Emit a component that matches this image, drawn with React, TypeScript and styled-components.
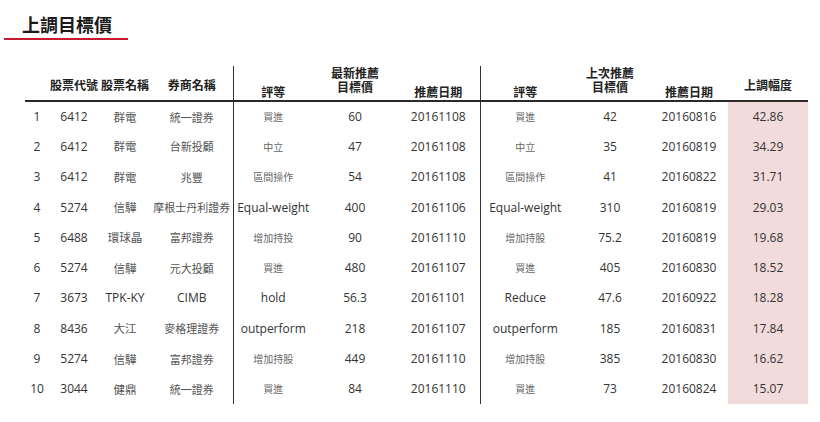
import React from 'react'
import styled, { createGlobalStyle } from 'styled-components'

type Row = {
  code: string
  name: string
  broker: string
  rating: string
  target: string
  date: string
  prevRating: string
  prevTarget: string
  prevDate: string
  change: string
}

const ROWS: Row[] = [
  { code: '6412', name: '群電', broker: '統一證券', rating: '買進', target: '60', date: '20161108', prevRating: '買進', prevTarget: '42', prevDate: '20160816', change: '42.86' },
  { code: '6412', name: '群電', broker: '台新投顧', rating: '中立', target: '47', date: '20161108', prevRating: '中立', prevTarget: '35', prevDate: '20160819', change: '34.29' },
  { code: '6412', name: '群電', broker: '兆豐', rating: '區間操作', target: '54', date: '20161108', prevRating: '區間操作', prevTarget: '41', prevDate: '20160822', change: '31.71' },
  { code: '5274', name: '信驊', broker: '摩根士丹利證券', rating: 'Equal-weight', target: '400', date: '20161106', prevRating: 'Equal-weight', prevTarget: '310', prevDate: '20160819', change: '29.03' },
  { code: '6488', name: '環球晶', broker: '富邦證券', rating: '增加持投', target: '90', date: '20161110', prevRating: '增加持股', prevTarget: '75.2', prevDate: '20160819', change: '19.68' },
  { code: '5274', name: '信驊', broker: '元大投顧', rating: '買進', target: '480', date: '20161107', prevRating: '買進', prevTarget: '405', prevDate: '20160830', change: '18.52' },
  { code: '3673', name: 'TPK-KY', broker: 'CIMB', rating: 'hold', target: '56.3', date: '20161101', prevRating: 'Reduce', prevTarget: '47.6', prevDate: '20160922', change: '18.28' },
  { code: '8436', name: '大江', broker: '麥格理證券', rating: 'outperform', target: '218', date: '20161107', prevRating: 'outperform', prevTarget: '185', prevDate: '20160831', change: '17.84' },
  { code: '5274', name: '信驊', broker: '富邦證券', rating: '增加持股', target: '449', date: '20161110', prevRating: '增加持股', prevTarget: '385', prevDate: '20160830', change: '16.62' },
  { code: '3044', name: '健鼎', broker: '統一證券', rating: '買進', target: '84', date: '20161110', prevRating: '買進', prevTarget: '73', prevDate: '20160824', change: '15.07' },
]

// column widths, left to right
const COLS = [24, 50, 52, 82, 80, 84, 83, 90, 80, 78, 80]

const isCjk = (s: string) => /[\u4e00-\u9fff]/.test(s)

const App: React.FC = () => {
  return (
    <>
      <GlobalStyle />
      <Page>
        <Title>上調目標價</Title>
        <Table>
          <colgroup>
            {COLS.map((w, i) => (
              <col key={i} style={{ width: w }} />
            ))}
          </colgroup>
          <thead>
            <tr>
              <Th />
              <Th>股票代號</Th>
              <Th>股票名稱</Th>
              <Th>券商名稱</Th>
              <Th $divider $align="bottom">評等</Th>
              <Th $align="stacked">最新推薦<br />目標價</Th>
              <Th $align="bottom">推薦日期</Th>
              <Th $divider $align="bottom">評等</Th>
              <Th $align="stacked">上次推薦<br />目標價</Th>
              <Th $align="bottom">推薦日期</Th>
              <Th>上調幅度</Th>
            </tr>
          </thead>
          <tbody>
            {ROWS.map((r, i) => (
              <tr key={i}>
                <Td>{i + 1}</Td>
                <Td>{r.code}</Td>
                <Td $cjk={isCjk(r.name)}>{r.name}</Td>
                <Td $cjk={isCjk(r.broker)} $narrow>{r.broker}</Td>
                <Td $divider>
                  <Rating $small={isCjk(r.rating)}>{r.rating}</Rating>
                </Td>
                <Td>{r.target}</Td>
                <Td>{r.date}</Td>
                <Td $divider>
                  <Rating $small={isCjk(r.prevRating)}>{r.prevRating}</Rating>
                </Td>
                <Td>{r.prevTarget}</Td>
                <Td>{r.prevDate}</Td>
                <Td $highlight>{r.change}</Td>
              </tr>
            ))}
          </tbody>
        </Table>
      </Page>
    </>
  )
}

export default App

const GlobalStyle = createGlobalStyle`
  html, body {
    margin: 0;
    padding: 0;
    background: #fff;
  }
  body {
    font-family: 'Open Sans', 'Noto Sans CJK TC', sans-serif;
    color: #333;
  }
`

const Page = styled.div`
  width: 820px;
  height: 422px;
  padding: 12px 0 0 0;
  box-sizing: border-box;
  overflow: hidden;
`

const Title = styled.h1`
  margin: 0 0 0 4px;
  width: 106px;
  padding: 0 0 2px 18px;
  font-family: 'Noto Sans CJK TC', sans-serif;
  font-size: 18px;
  font-weight: 700;
  line-height: 24px;
  color: #1a1a1a;
  border-bottom: 2px solid #c8192e;
`

const Table = styled.table`
  margin: 26px 0 0 25px;
  width: 783px;
  table-layout: fixed;
  border-collapse: collapse;
`

type HeadAlign = 'middle' | 'bottom' | 'stacked'

const Th = styled.th<{ $divider?: boolean; $align?: HeadAlign }>`
  box-sizing: border-box;
  height: 35px;
  padding: ${(p) => (p.$align === 'stacked' || p.$align === 'bottom' ? '0' : '3px 0 0')};
  vertical-align: ${(p) =>
    p.$align === 'stacked' ? 'top' : p.$align === 'bottom' ? 'bottom' : 'middle'};
  font-family: 'Noto Sans CJK TC', sans-serif;
  font-size: 12px;
  font-weight: 700;
  line-height: ${(p) => (p.$align === 'stacked' ? '14px' : '16px')};
  color: #222;
  text-align: center;
  white-space: nowrap;
  border-bottom: 2px solid #2a2a2a;
  border-left: ${(p) => (p.$divider ? '1px solid #333' : 'none')};
`

const Td = styled.td<{ $divider?: boolean; $cjk?: boolean; $narrow?: boolean; $highlight?: boolean }>`
  box-sizing: border-box;
  height: 30.3px;
  padding: 0;
  text-align: center;
  vertical-align: middle;
  white-space: nowrap;
  font-size: ${(p) => (p.$cjk ? (p.$narrow ? '11px' : '11.5px') : '12px')};
  font-family: ${(p) =>
    p.$cjk ? "'Noto Sans CJK TC', sans-serif" : "'Open Sans', 'Noto Sans CJK TC', sans-serif"};
  color: ${(p) => (p.$cjk ? '#555' : '#333')};
  background: ${(p) => (p.$highlight ? '#f2dcdb' : 'transparent')};
  border-left: ${(p) => (p.$divider ? '1px solid #333' : 'none')};
`

const Rating = styled.span<{ $small?: boolean }>`
  font-family: ${(p) =>
    p.$small ? "'Noto Sans CJK TC', sans-serif" : "'Open Sans', sans-serif"};
  font-size: ${(p) => (p.$small ? '10px' : '12px')};
  color: ${(p) => (p.$small ? '#666' : '#333')};
`
